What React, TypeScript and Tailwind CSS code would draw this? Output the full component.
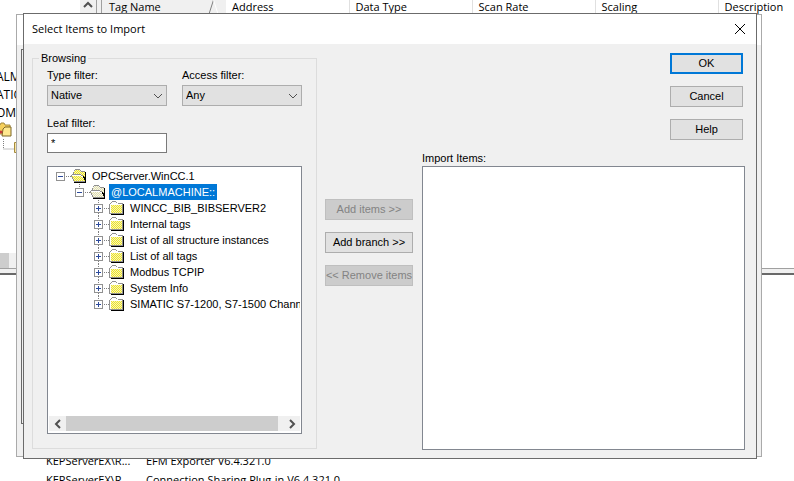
import { useState } from "react"

const columns = ["Address", "Data Type", "Scan Rate", "Scaling"]

const logRows = [
  { source: "KEPServerEX\\R...", event: "EFM Exporter V6.4.321.0" },
  { source: "KEPServerEX\\R...", event: "Connection Sharing Plug-in V6.4.321.0" },
]

const treeItems = [
  { name: "OPCServer.WinCC.1", level: 0, open: true },
  { name: "@LOCALMACHINE::", level: 1, open: true },
  { name: "WINCC_BIB_BIBSERVER2", level: 2, open: false },
  { name: "Internal tags", level: 2, open: false },
  { name: "List of all structure instances", level: 2, open: false },
  { name: "List of all tags", level: 2, open: false },
  { name: "Modbus TCPIP", level: 2, open: false },
  { name: "System Info", level: 2, open: false },
  { name: "SIMATIC S7-1200, S7-1500 Channel", level: 2, open: false },
]

const indents = ["pl-[7px]", "pl-[26px]", "pl-[45px]"]

function Chevron({ d, className }: { d: string; className?: string }) {
  return (
    <svg width="10" height="10" viewBox="0 0 10 10" fill="none" stroke="#505050" className={className}>
      <path d={d} />
    </svg>
  )
}

// Expander box, dotted connectors and the folder for one tree row
function NodeIcon({ open, root, last, selected }: { open: boolean; root: boolean; last: boolean; selected: boolean }) {
  const fill = selected ? "url(#dither-selected)" : "url(#dither)"
  return (
    <svg width="34" height="16" viewBox="0 0 34 16" shapeRendering="crispEdges" className="shrink-0">
      {!root && <path d="M4.5 0v4" stroke="#808080" strokeDasharray="1 1" />}
      {!open && !last && <path d="M4.5 13v3" stroke="#808080" strokeDasharray="1 1" />}
      {open && <path d="M23.5 14v2" stroke="#808080" strokeDasharray="1 1" />}
      <path d="M10 8.5h5" stroke="#808080" strokeDasharray="1 1" />
      <rect x="0.5" y="4.5" width="8" height="8" fill="#fff" stroke="#919191" />
      <path d="M2 8.5h5" stroke="#2c4a9c" />
      {!open && <path d="M4.5 6v5" stroke="#2c4a9c" />}
      {open ? (
        <>
          <path d="M18 3h1V2h5v1h1v1h4v10H18z" fill={fill} />
          <path d="M17.5 7V3.5M18 2.5h1M19 1.5h5M24 2.5h1M25 3.5h4" stroke="#909090" fill="none" />
          <path d="M15 7h10v1h2v2h1v2h1v2H18v-2h-1v-2h-1V8h-1z" fill={fill} />
          <path d="M15.5 7v2M16.5 9v2M17.5 11v2M18 13.5h11" stroke="#909090" fill="none" />
          <path d="M16 6.5h9M25 7.5h2" stroke="#909090" />
          <path d="M16 7.5h9M25 8.5h2" stroke="#fff" />
          <path d="M29 4h1v11H18v-1h11v-2h-1v-2h-1V8h1v1h1z" fill="#000" />
        </>
      ) : (
        <>
          <path d="M29 4h1v11H17v-1h12z" fill="#000" />
          <path d="M16 4h13v10H16z" fill={fill} />
          <path
            d="M15.5 13.5h13v-10h-5M15.5 14V4M16 3.5h1M17 2.5h1M18 1.5h4M22 2.5h1"
            fill="none"
            stroke="#909090"
          />
          <path d="M16 4.5h12M16.5 5v8M18 2.5h4M17 3.5h6" stroke="#fff" />
        </>
      )}
    </svg>
  )
}

function DialogButton({ label, primary, disabled }: { label: string; primary?: boolean; disabled?: boolean }) {
  let look = "border border-[#adadad] bg-[#e1e1e1]"
  if (primary) look = "border-2 border-[#0078d7] bg-[#e1e1e1]"
  if (disabled) look = "border border-[#bfbfbf] bg-[#cccccc] text-[#838383]"
  return (
    <button disabled={disabled} className={`flex h-[21px] w-full items-center justify-center whitespace-nowrap ${look}`}>
      {label}
    </button>
  )
}

function FilterSelect({ id, label, options }: { id: string; label: string; options: string[] }) {
  return (
    <div className="w-[120px]">
      <label htmlFor={id} className="mb-0.5 block leading-4">
        {label}
      </label>
      <div className="relative">
        <select id={id} className="block h-[21px] w-full appearance-none border border-[#adadad] bg-[#e1e1e1] pl-[3px]">
          {options.map((option) => (
            <option key={option}>{option}</option>
          ))}
        </select>
        <Chevron d="M1 3l4 4 4-4" className="pointer-events-none absolute right-1 top-[6px]" />
      </div>
    </div>
  )
}

function MainWindow() {
  return (
    <div className="flex h-screen flex-col bg-white font-['Open_Sans',sans-serif] text-[11px]">
      <div className="flex h-[268px]">
        <div className="flex w-24 shrink-0 flex-col">
          <div className="flex justify-end">
            <button aria-label="Scroll up" className="flex h-4 w-4 justify-center bg-[#f0f0f0]">
              <Chevron d="M1 7l4-4 4 4" className="stroke-2" />
            </button>
          </div>
          <div className="mt-auto h-[185px] text-[12px]">
            <div className="-ml-1 h-[18px] leading-[18px]">ALM</div>
            <div className="-ml-1 h-[18px] leading-[18px]">ATIO</div>
            <div className="-ml-1 h-[18px] leading-[18px]">OM</div>
            <svg width="20" height="34" viewBox="0 0 20 34">
              <path d="M-2 3h2l1-2h3l1 2h5v9H-2z" fill="#f5cf5a" stroke="#a58a3c" />
              <path d="M3 7l2-2h6v9H2z" fill="#ffe88f" stroke="#7c6626" />
              <circle cx="1" cy="10" r="1.5" fill="#c83c3c" />
              <path d="M16 5h2M16 10h2" stroke="#e8a23c" />
              <path d="M3.5 17v10h11" fill="none" stroke="#808080" strokeDasharray="1 1" />
              <path d="M14.5 20.5h6v10h-6z" fill="#f8e6a8" stroke="#a58a3c" />
            </svg>
          </div>
          <div className="h-[15px] bg-[#f0f0f0]">
            <div className="h-[15px] w-[9px] bg-[#cdcdcd]" />
          </div>
        </div>
        <div className="w-1.5 shrink-0 border-x border-[#a0a0a0] bg-[#f0f0f0]" />
        <table className="h-[14px] w-full table-fixed text-left">
          <thead>
            <tr>
              <th className="h-[14px] w-[124px] bg-[#f0f0f0] p-0 pl-[7px] font-normal leading-[14px]">
                <div className="flex">
                  <span className="w-[98px]">Tag Name</span>
                  <svg width="12" height="14" viewBox="0 0 12 14" fill="none">
                    <path d="M2 14L6.5 0" stroke="#808080" />
                    <path d="M6.5 0L11 14" stroke="#fff" />
                  </svg>
                </div>
              </th>
              {columns.map((column) => (
                <th key={column} className="w-[123px] border-r border-[#e0e0e0] p-0 pl-1.5 font-normal leading-[14px]">
                  {column}
                </th>
              ))}
              <th className="p-0 pl-1.5 font-normal leading-[14px]">Description</th>
            </tr>
          </thead>
        </table>
      </div>
      <div className="h-[7px] shrink-0 border-b-2 border-t border-b-[#696969] border-t-[#a0a0a0] bg-[#f0f0f0]" />
      <div className="min-h-0 flex-1 overflow-hidden pt-[177px]">
        <table className="table-fixed text-left">
          <tbody>
            {logRows.map((row) => (
              <tr key={row.event} className="h-[19px]">
                <td className="w-[146px] p-0 pl-[46px]">{row.source}</td>
                <td className="whitespace-nowrap p-0">{row.event}</td>
              </tr>
            ))}
          </tbody>
        </table>
      </div>
    </div>
  )
}

export default function App() {
  const [selected, setSelected] = useState("@LOCALMACHINE::")
  const [leaf, setLeaf] = useState("*")

  return (
    <div className="relative h-screen overflow-hidden font-['Liberation_Sans',Arial,sans-serif] text-[11px] text-black">
      <MainWindow />

      {/* Properties window that owns the import dialog */}
      <div className="absolute left-4 right-8 top-[14px] h-[443px] border border-[#aaaaaa] bg-[#f0f0f0]">
        <div className="h-[30px] bg-white" />
        <div className="mx-1 mt-1 h-[375px] border border-[#696969] border-r-[#a0a0aa]" />
      </div>

      <div
        role="dialog"
        aria-label="Select Items to Import"
        className="absolute left-[23px] right-[37px] top-[13px] border border-[#6b6b6b] bg-[#f0f0f0]"
      >
        <div className="flex h-[30px] items-center justify-between bg-white pl-2 pr-2.5 font-['Open_Sans',sans-serif]">
          <h1>Select Items to Import</h1>
          <button aria-label="Close">
            <svg width="12" height="12" viewBox="0 0 12 12" stroke="#000">
              <path d="M1 1l10 10M11 1L1 11" />
            </svg>
          </button>
        </div>

        <div className="flex gap-2 pb-2 pl-2 pr-[11px] pt-1.5">
          <fieldset className="mb-px w-[285px] min-w-0 shrink-0 border border-[#dcdcdc] px-3.5 pb-3.5 pt-px">
            <legend className="-ml-2 px-0.5 leading-4">Browsing</legend>
            <div className="flex gap-[15px]">
              <FilterSelect id="type-filter" label="Type filter:" options={["Native"]} />
              <FilterSelect id="access-filter" label="Access filter:" options={["Any"]} />
            </div>
            <label htmlFor="leaf-filter" className="mb-0.5 mt-[9px] block leading-4">
              Leaf filter:
            </label>
            <input
              id="leaf-filter"
              value={leaf}
              onChange={(e) => setLeaf(e.target.value)}
              className="block h-5 w-[120px] border border-[#7a7a7a] bg-white px-[3px]"
            />
            <div className="mt-[13px] flex h-[268px] flex-col justify-between border border-[#828790] bg-white p-px pb-0.5">
              <ul role="tree" className="overflow-hidden">
                {treeItems.map((item, i) => (
                  <li
                    key={item.name}
                    role="treeitem"
                    aria-selected={selected === item.name}
                    onClick={() => setSelected(item.name)}
                    className={`flex h-4 items-center whitespace-nowrap leading-4 ${indents[item.level]}`}
                  >
                    <NodeIcon
                      open={item.open}
                      root={item.level === 0}
                      last={i === treeItems.length - 1}
                      selected={selected === item.name}
                    />
                    <span className={selected === item.name ? "bg-[#0078d7] px-0.5 text-white" : "px-0.5"}>{item.name}</span>
                  </li>
                ))}
              </ul>
              <div className="flex h-[15px] bg-[#f0f0f0]">
                <button aria-label="Scroll left" className="flex w-[17px] items-center justify-center">
                  <Chevron d="M7 1L3 5l4 4" className="stroke-2" />
                </button>
                <div className="mr-[5px] flex-1 bg-[#cdcdcd]" />
                <button aria-label="Scroll right" className="flex w-[17px] items-center justify-center">
                  <Chevron d="M3 1l4 4-4 4" className="stroke-2" />
                </button>
              </div>
            </div>
          </fieldset>

          <div className="flex w-[88px] shrink-0 flex-col gap-3 pt-[149px]">
            <DialogButton label="Add items >>" disabled />
            <DialogButton label="Add branch >>" />
            <DialogButton label="<< Remove items" disabled />
          </div>

          <div className="flex flex-1 flex-col pl-px pt-[3px]">
            <div className="mr-0.5 flex w-[73px] flex-col gap-3 self-end">
              <DialogButton label="OK" primary />
              <DialogButton label="Cancel" />
              <DialogButton label="Help" />
            </div>
            <h2 className="mt-2.5 leading-4">Import Items:</h2>
            <ul aria-label="Import Items" className="flex-1 border border-[#828790] bg-white" />
          </div>
        </div>
      </div>

      <svg width="0" height="0" className="absolute">
        <pattern id="dither" width="2" height="2" patternUnits="userSpaceOnUse">
          <rect width="2" height="2" fill="#f4f0c0" />
          <rect width="1" height="1" fill="#f0e820" />
          <rect x="1" y="1" width="1" height="1" fill="#f0e820" />
        </pattern>
        <pattern id="dither-selected" width="2" height="2" patternUnits="userSpaceOnUse">
          <rect width="2" height="2" fill="#f4f4ee" />
          <rect width="1" height="1" fill="#e2dfa8" />
          <rect x="1" y="1" width="1" height="1" fill="#e2dfa8" />
        </pattern>
      </svg>
    </div>
  )
}
